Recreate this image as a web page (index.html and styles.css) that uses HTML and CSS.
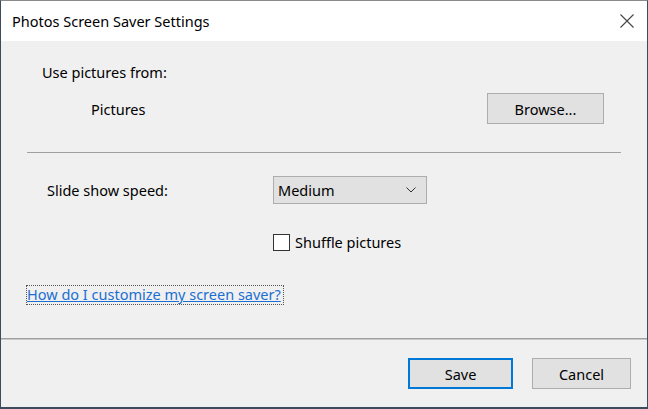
FILE: index.html
```html
<!DOCTYPE html>
<html>
<head>
<meta charset="utf-8">
<link rel="stylesheet" href="styles.css">
</head>
<body>
<div class="window">
  <div class="titlebar">
    <span class="title">Photos Screen Saver Settings</span>
    <svg class="close" width="14" height="14" viewBox="0 0 14 14"><path d="M0.5 0.5 L13.5 13.5 M13.5 0.5 L0.5 13.5" stroke="#444" stroke-width="1.1" fill="none"/></svg>
  </div>
  <div class="content">
    <div class="main">
      <div class="label-use">Use pictures from:</div>
      <div class="row-pictures">
        <span class="folder">Pictures</span>
        <button class="btn browse">Browse...</button>
      </div>
      <div class="sep"></div>
      <div class="row-speed">
        <span class="speed-label">Slide show speed:</span>
        <div class="select">
          <span>Medium</span>
          <svg width="10" height="6" viewBox="0 0 10 6"><path d="M0.5 0.5 L5 5 L9.5 0.5" stroke="#333" stroke-width="1" fill="none"/></svg>
        </div>
      </div>
      <div class="row-shuffle">
        <span class="checkbox"></span>
        <span>Shuffle pictures</span>
      </div>
      <div class="row-link">
        <a class="link">How do I customize my screen saver?</a>
      </div>
    </div>
    <div class="footer">
      <button class="btn save">Save</button>
      <button class="btn cancel">Cancel</button>
    </div>
  </div>
</div>
</body>
</html>
```
FILE: styles.css
```css
html, body {
  margin: 0;
  padding: 0;
  background: #f0f0f0;
}
body {
  font-family: "Noto Sans", "Open Sans", sans-serif;
  font-size: 14.5px;
  color: #000;
}
.window {
  width: 648px;
  height: 409px;
  box-sizing: border-box;
  border: 1px solid #3d4b5c;
  border-top-color: #8a8a8a;
  border-bottom-width: 2px;
  display: flex;
  flex-direction: column;
  background: #f0f0f0;
}
.titlebar {
  height: 40px;
  background: #fff;
  display: flex;
  align-items: center;
  justify-content: space-between;
  padding: 0 13px 0 11px;
  flex: none;
}
.title {
  font-size: 14.5px;
  line-height: 20px;
}
.close {
  display: block;
}
.content {
  flex: 1;
  display: flex;
  flex-direction: column;
}
.main {
  flex: 1;
  padding: 21px 26px 0 26px;
}
.label-use {
  padding-left: 15px;
  line-height: 20px;
}
.row-pictures {
  display: flex;
  align-items: center;
  justify-content: space-between;
  margin-top: 11px;
  padding-left: 64px;
  padding-right: 17px;
}
.folder {
  line-height: 20px;
  padding-top: 1px;
}
.btn {
  font-family: inherit;
  font-size: 14.5px;
  color: #000;
  background: #e1e1e1;
  border: 1px solid #adadad;
  padding: 0;
  margin: 0;
  height: 31px;
}
.browse {
  width: 117px;
}
.sep {
  height: 1px;
  background: #a0a0a0;
  margin-top: 28px;
}
.row-speed {
  display: flex;
  align-items: center;
  margin-top: 23px;
  padding-left: 20px;
}
.speed-label {
  width: 226px;
  line-height: 20px;
}
.select {
  display: flex;
  align-items: center;
  justify-content: space-between;
  padding: 0 10px 0 4px;
  box-sizing: border-box;
  width: 154px;
  height: 28px;
  border: 1px solid #adadad;
  background: #e1e1e1;
}
.row-shuffle {
  display: flex;
  align-items: center;
  margin-top: 28px;
  padding-left: 246px;
  line-height: 20px;
}
.checkbox {
  width: 17px;
  height: 17px;
  box-sizing: border-box;
  border: 1px solid #333;
  background: #fff;
  margin-right: 5px;
}
.row-link {
  margin-top: 32px;
}
.link {
  color: #1a6fd0;
  text-decoration: underline;
  outline: 1px dotted #555;
  line-height: 17px;
  display: inline-block;
  padding: 0 2px 1px 0;
}
.footer {
  height: 69px;
  box-sizing: border-box;
  border-top: 1px solid #a0a0a0;
  box-shadow: inset 0 1px 0 #c8c8c8;
  display: flex;
  align-items: flex-start;
  justify-content: flex-end;
  padding: 19px 16px 0 0;
  gap: 19px;
  flex: none;
}
.save {
  width: 105px;
  border: 2px solid #0078d7;
}
.cancel {
  width: 99px;
}
```
